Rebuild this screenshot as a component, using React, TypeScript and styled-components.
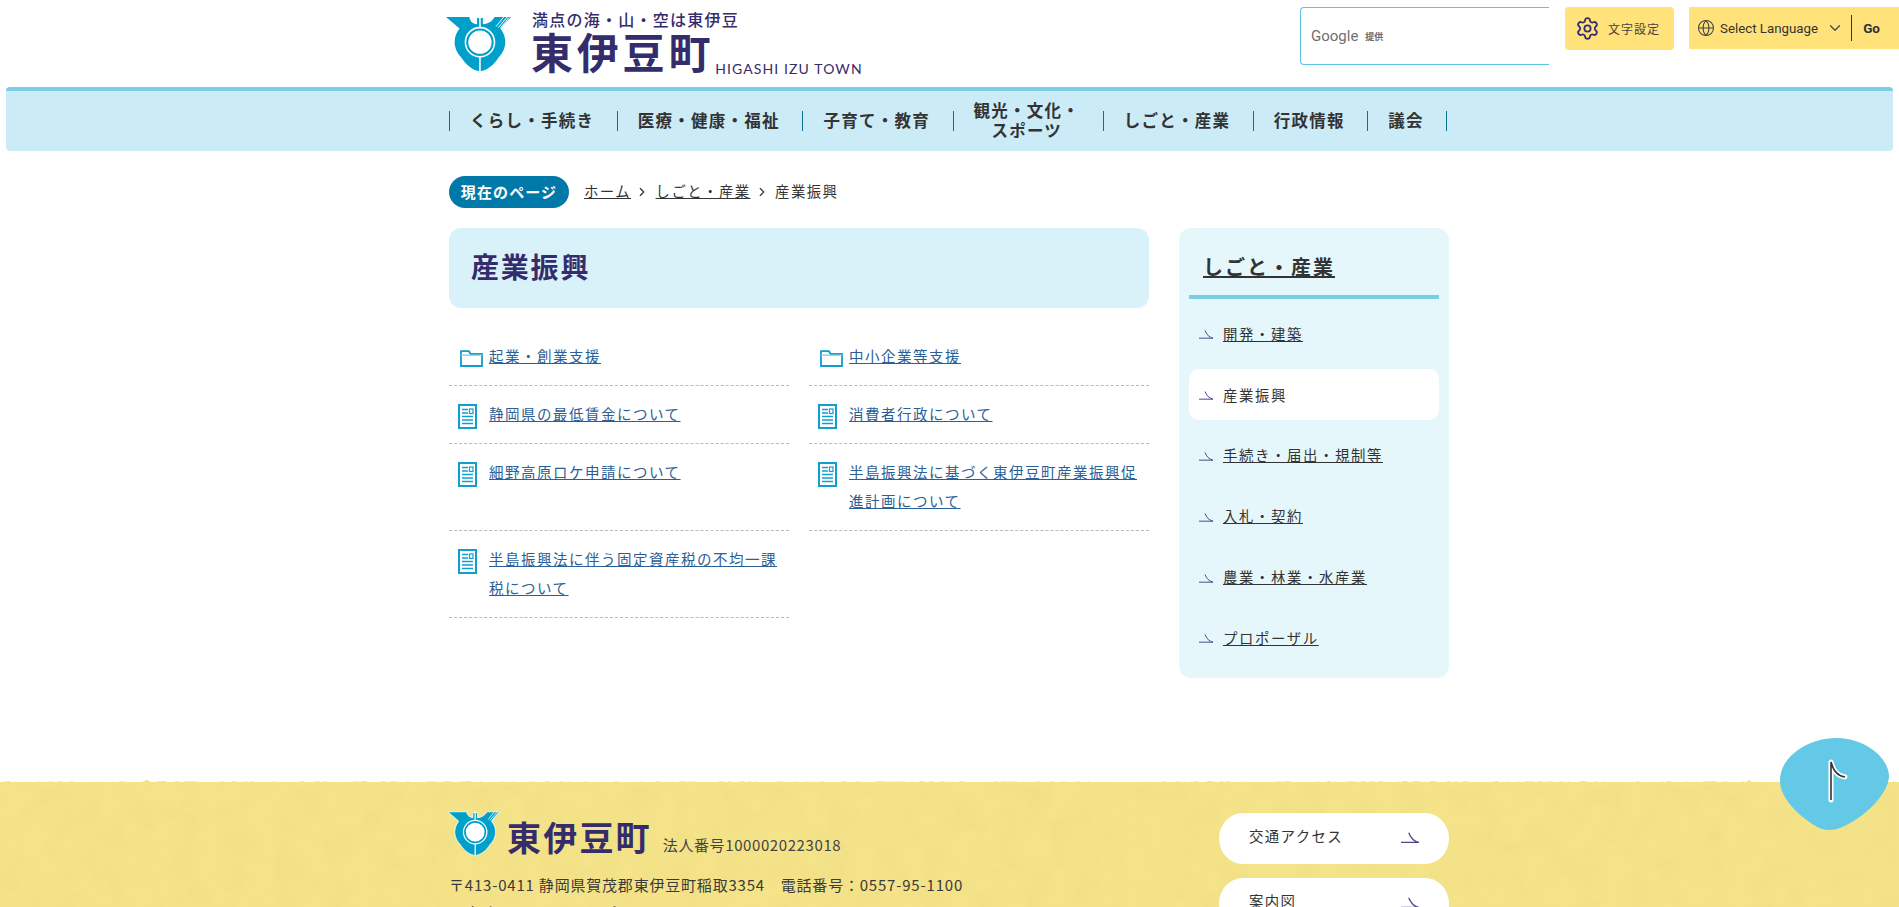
import { useMemo } from 'react'
import styled, { createGlobalStyle } from 'styled-components'
import { ChevronDown, ChevronRight, Globe, Settings } from 'lucide-react'

const GlobalStyle = createGlobalStyle`
  html, body {
    margin: 0;
    height: 907px;
    overflow: hidden;
    background: #fff;
  }
  body {
    font-family: "Noto Sans CJK JP", "Noto Sans", sans-serif;
    color: #333;
  }
  ul {
    margin: 0;
    padding: 0;
    list-style: none;
  }
  a {
    color: inherit;
  }
`

const Header = styled.header`
  display: flex;
  justify-content: space-between;
  align-items: flex-start;
  height: 87px;
  padding-left: 445px;
`

const LogoLink = styled.div`
  display: flex;
  gap: 20px;
  padding-top: 16px;
  height: 71px;
  box-sizing: border-box;
`

const LogoText = styled.div`
  display: flex;
  flex-direction: column;
  color: #352c6b;
  margin-top: -9px;
`

const Tagline = styled.div`
  font-size: 16px;
  font-weight: 500;
  letter-spacing: 1.25px;
  line-height: 20px;
  margin-top: 2px;
  white-space: nowrap;
`

const TownRow = styled.div`
  display: flex;
  align-items: flex-end;
  gap: 1px;
  margin: -2px 0 0 -1px;
`

const TownName = styled.div<{ $size: number; $spacing: number }>`
  font-size: ${({ $size }) => $size}px;
  letter-spacing: ${({ $spacing }) => $spacing}px;
  font-weight: 700;
  line-height: 1.15;
  color: #352c6b;
  white-space: nowrap;
`

const TownRoman = styled.div`
  font-family: "Lato", "Noto Sans", sans-serif;
  font-size: 14px;
  letter-spacing: 1.1px;
  line-height: 16px;
  margin-bottom: -2px;
  white-space: nowrap;
`

const Tools = styled.div`
  display: flex;
  align-items: flex-start;
  padding-top: 7px;
`

const SearchBox = styled.div`
  display: flex;
  align-items: center;
  gap: 7px;
  width: 249px;
  height: 58px;
  box-sizing: border-box;
  padding-left: 10px;
  border: 1px solid #5cc3e3;
  border-right: 0;
  border-radius: 4px 0 0 4px;
  margin-right: 16px;
`

const GoogleMark = styled.span`
  font-family: "Roboto", "Liberation Sans", sans-serif;
  font-size: 15px;
  color: #6f6f6f;
`

const Provided = styled.span`
  font-size: 9px;
  font-weight: 700;
  color: #666;
`

const SizeButton = styled.div`
  display: flex;
  align-items: center;
  gap: 8px;
  width: 109px;
  height: 43px;
  box-sizing: border-box;
  padding-left: 10px;
  margin-right: 15px;
  border-radius: 4px;
  background: #ffe27a;
  color: #352c6b;
`

const SizeLabel = styled.span`
  font-size: 12px;
  letter-spacing: 1px;
  color: #444;
`

const LanguageBar = styled.div`
  display: flex;
  align-items: center;
  width: 210px;
  height: 42px;
  box-sizing: border-box;
  padding-left: 8px;
  background: #ffe27a;
  color: #444;
`

const LanguageName = styled.span`
  font-family: "Roboto", "Liberation Sans", sans-serif;
  font-size: 13.3px;
  margin: 0 8px 0 5px;
  color: #333;
`

const GoLabel = styled.span`
  height: 26px;
  line-height: 26px;
  margin-left: 7px;
  padding-left: 11px;
  border-left: 1px solid #333;
  font-family: "Roboto", "Liberation Sans", sans-serif;
  font-size: 13.5px;
  font-weight: 700;
  color: #333;
`

const NavBar = styled.nav`
  margin: 0 6px;
  height: 64px;
  box-sizing: border-box;
  border-top: 4px solid #7ccde6;
  border-radius: 4px;
  background: #cbebf7;
`

const NavList = styled.ul`
  display: flex;
  align-items: center;
  width: 1000px;
  height: 60px;
  margin-left: 443px;
`

const NavItem = styled.li`
  flex: none;
  display: flex;
  align-items: center;
  justify-content: center;
  height: 20px;
  padding: 0 22.6px 0 20px;
  border-left: 1px solid #0e6f8f;
  font-size: 16.5px;
  font-weight: 700;
  letter-spacing: 1.25px;
  line-height: 20px;
  text-align: center;
  color: #333;
  white-space: pre-line;
  &:last-child {
    border-right: 1px solid #0e6f8f;
  }
`

const NavLabel = styled.span`
  margin-top: -2px;
`

const Main = styled.main`
  width: 1000px;
  margin: 25px 0 0 449px;
`

const Breadcrumb = styled.div`
  display: flex;
  align-items: center;
  height: 32px;
  font-size: 14.4px;
  letter-spacing: 1.44px;
`

const CrumbText = styled.a`
  margin-top: -4px;
`

const CurrentPill = styled.div`
  display: flex;
  align-items: center;
  justify-content: center;
  width: 120px;
  height: 32px;
  box-sizing: border-box;
  padding-bottom: 2px;
  margin-right: 15px;
  border-radius: 16px;
  background: #0079a8;
  color: #fff;
  font-weight: 700;
  font-size: 15px;
  letter-spacing: 1.1px;
`

const CrumbSep = styled.span`
  display: flex;
  margin: 0 6.5px 0 4px;
  color: #333;
`

const Columns = styled.div`
  display: flex;
  justify-content: space-between;
  align-items: flex-start;
  margin-top: 20px;
`

const Content = styled.div`
  width: 700px;
`

const TitlePanel = styled.h1`
  margin: 0 0 20px;
  height: 80px;
  box-sizing: border-box;
  padding-left: 22px;
  border-radius: 12px;
  background: #d9f2fa;
  color: #352c6b;
  font-size: 28px;
  letter-spacing: 1.8px;
  font-weight: 700;
  line-height: 76px;
`

const LinkGrid = styled.ul`
  display: grid;
  grid-template-columns: 340px 340px;
  column-gap: 20px;
`

const LinkRow = styled.li`
  display: flex;
  align-items: flex-start;
  padding: 13px 0 15px 9px;
  border-bottom: 1px dashed #bbb;
  font-size: 14.5px;
  letter-spacing: 1.5px;
  line-height: 29px;
  color: #2a6096;
`

const IconCell = styled.span`
  flex: none;
  width: 31px;
  height: 29px;
  padding-top: 5px;
  box-sizing: border-box;
`

const Side = styled.aside`
  width: 270px;
  box-sizing: border-box;
  padding: 0 10px 15px;
  border-radius: 12px;
  background: #e6f7fb;
`

const SideTitle = styled.div`
  height: 67px;
  box-sizing: border-box;
  padding: 25px 0 0 14px;
  font-size: 20px;
  font-weight: 700;
  letter-spacing: 2px;
  line-height: 28px;
  color: #333;
  a {
    text-decoration-thickness: 2px;
  }
`

const SideRule = styled.div`
  height: 4px;
  background: #7ccde6;
`

const SideList = styled.ul`
  display: flex;
  flex-direction: column;
  gap: 10px;
  padding-top: 9px;
`

const SideItem = styled.li<{ $current?: boolean }>`
  display: flex;
  align-items: center;
  gap: 10px;
  height: 50.8px;
  padding-left: 10px;
  border-radius: 10px;
  background: ${({ $current }) => ($current ? '#fff' : 'transparent')};
  font-size: 14.4px;
  letter-spacing: 1.6px;
  color: #333;
`

const Footer = styled.footer`
  position: relative;
  margin-top: 104px;
  height: 400px;
  background: #f4e389;
`

const FooterTexture = styled.svg`
  position: absolute;
  inset: 0;
  width: 100%;
  height: 100%;
`

const FooterEdge = styled.svg`
  position: absolute;
  left: 0;
  top: -5px;
`

const FooterInner = styled.div`
  position: relative;
  display: flex;
  justify-content: space-between;
  width: 1000px;
  margin-left: 449px;
  padding-top: 31px;
`

const FooterLogoRow = styled.div`
  display: flex;
  align-items: flex-end;
  height: 44px;
  margin-left: -2px;
`

const FooterTown = styled(TownName)`
  margin: 0 0 1px 6px;
`

const CorporateNo = styled.span`
  margin: 0 0 1px 11px;
  font-size: 15px;
  letter-spacing: 0.6px;
  line-height: 22px;
  color: #444;
`

const Address = styled.p`
  margin: 14px 0 0;
  font-size: 15px;
  letter-spacing: 0.8px;
  line-height: 28px;
  white-space: pre-line;
  color: #3a3a3a;
`

const FooterLinks = styled.div`
  display: flex;
  flex-direction: column;
  gap: 14px;
  width: 230px;
`

const FooterLink = styled.div`
  display: flex;
  align-items: center;
  justify-content: space-between;
  height: 51px;
  box-sizing: border-box;
  padding: 0 30px 5px;
  border-radius: 26px / 28px;
  background: #fff;
  font-size: 14.4px;
  letter-spacing: 1.4px;
`

const BackToTop = styled.svg`
  position: fixed;
  left: 1780px;
  top: 738px;
`

const navItems = ['くらし・手続き', '医療・健康・福祉', '子育て・教育', '観光・文化・\nスポーツ', 'しごと・産業', '行政情報', '議会']

const links = [
  { text: '起業・創業支援', folder: true },
  { text: '中小企業等支援', folder: true },
  { text: '静岡県の最低賃金について' },
  { text: '消費者行政について' },
  { text: '細野高原ロケ申請について' },
  { text: '半島振興法に基づく東伊豆町産業振興促進計画について' },
  { text: '半島振興法に伴う固定資産税の不均一課税について' },
]

const sideItems = ['開発・建築', '産業振興', '手続き・届出・規制等', '入札・契約', '農業・林業・水産業', 'プロポーザル']

const Emblem = ({ width, outline }: { width: number; outline?: boolean }) => (
  <svg width={width} height={width * 0.84} viewBox="5 15 69 58" style={{ flex: 'none', overflow: 'visible' }}>
    <path
      d="M6 16H30C31 20 33 23 38 23.5V17H44V23.5C50 23 54 20 56 16H73L62 28C70 38 68 50 60 58C55 66 48 71 41 72C34 71 27 66 22 58C14 50 12 38 20 28Z"
      fill="#00a0cb"
      stroke={outline ? '#fff' : 'none'}
      strokeWidth={outline ? 1 : 0}
    />
    <path d="M41 16V27M41 54V73" stroke="#fff" strokeWidth="1.6" />
    <path d="M60 27L69 16M62.5 27L71 16.5M57.5 26L65.5 16" stroke="#fff" strokeWidth="1" />
    <circle cx="41" cy="42" r="15" fill="#00a0cb" stroke="#fff" strokeWidth="1.6" />
    <circle cx="41" cy="42" r="12" fill="#fff" />
  </svg>
)

const FolderIcon = () => (
  <svg width="23" height="17" viewBox="0 0 23 17" style={{ marginTop: -4, marginLeft: 2 }}>
    <path d="M1 16V1.2H9L10.5 4H22V16Z" fill="#fff" stroke="#0f9dce" strokeWidth="1.8" />
    <path d="M1 5.2H22" stroke="#8fd3ea" strokeWidth="1.5" />
  </svg>
)

const DocIcon = () => (
  <svg width="19" height="25" viewBox="0 0 19 25">
    <rect x="1" y="1" width="17" height="23" fill="#fff" stroke="#119fcf" strokeWidth="2" />
    <path d="M4 5.5H10M4 9H10M4 12.5H15M4 16H15M4 19.5H15" stroke="#119fcf" strokeWidth="1.3" />
    <rect x="11.5" y="5" width="3.5" height="4.5" fill="none" stroke="#119fcf" strokeWidth="1.2" />
  </svg>
)

const HalfArrow = ({ width = 14 }: { width?: number }) => (
  <svg width={width} height={width * 0.64} viewBox="0 0 14 9" style={{ flex: 'none', marginTop: 3 }}>
    <path d="M0 8.2H14C10 7.4 7.6 4.4 6 .5" fill="none" stroke="#4f4788" strokeWidth="1" />
  </svg>
)

const useEdgePath = () =>
  useMemo(() => {
    let seed = 17
    const next = () => {
      seed = (seed * 1103515245 + 12345) & 0x7fffffff
      return seed / 0x7fffffff
    }
    let d = 'M0 8'
    for (let x = 0; x <= 1899; x += 3) {
      const y = x === 1749 || x === 147 ? 2.5 : 4 + next() * 2
      d += `L${x} ${y.toFixed(1)}`
    }
    return `${d}L1899 8Z`
  }, [])

const App = () => {
  const edgePath = useEdgePath()

  return (
    <>
      <GlobalStyle />
      <Header>
        <LogoLink>
          <Emblem width={67} />
          <LogoText>
            <Tagline>満点の海・山・空は東伊豆</Tagline>
            <TownRow>
              <TownName $size={42} $spacing={3.8}>東伊豆町</TownName>
              <TownRoman>HIGASHI IZU TOWN</TownRoman>
            </TownRow>
          </LogoText>
        </LogoLink>
        <Tools>
          <SearchBox>
            <GoogleMark>Google</GoogleMark>
            <Provided>提供</Provided>
          </SearchBox>
          <SizeButton>
            <Settings size={25} strokeWidth={1.7} />
            <SizeLabel>文字設定</SizeLabel>
          </SizeButton>
          <LanguageBar>
            <Globe size={18} strokeWidth={1.4} />
            <LanguageName>Select Language</LanguageName>
            <ChevronDown size={18} strokeWidth={1.6} />
            <GoLabel>Go</GoLabel>
          </LanguageBar>
        </Tools>
      </Header>

      <NavBar>
        <NavList>
          {navItems.map((item) => (
            <NavItem key={item}><NavLabel>{item}</NavLabel></NavItem>
          ))}
        </NavList>
      </NavBar>

      <Main>
        <Breadcrumb>
          <CurrentPill>現在のページ</CurrentPill>
          <CrumbText href="#home">ホーム</CrumbText>
          <CrumbSep><ChevronRight size={14} strokeWidth={2} /></CrumbSep>
          <CrumbText href="#work">しごと・産業</CrumbText>
          <CrumbSep><ChevronRight size={14} strokeWidth={2} /></CrumbSep>
          <CrumbText as="span">産業振興</CrumbText>
        </Breadcrumb>

        <Columns>
          <Content>
            <TitlePanel>産業振興</TitlePanel>
            <LinkGrid>
              {links.map((link) => (
                <LinkRow key={link.text}>
                  <IconCell>{link.folder ? <FolderIcon /> : <DocIcon />}</IconCell>
                  <a href="#page">{link.text}</a>
                </LinkRow>
              ))}
            </LinkGrid>
          </Content>

          <Side>
            <SideTitle><a href="#work">しごと・産業</a></SideTitle>
            <SideRule />
            <SideList>
              {sideItems.map((item) => (
                <SideItem key={item} $current={item === '産業振興'}>
                  <HalfArrow />
                  {item === '産業振興' ? <span>{item}</span> : <a href="#side">{item}</a>}
                </SideItem>
              ))}
            </SideList>
          </Side>
        </Columns>
      </Main>

      <Footer>
        <FooterTexture>
          <filter id="paper" colorInterpolationFilters="sRGB">
            <feTurbulence type="fractalNoise" baseFrequency="0.04" numOctaves="4" seed="4" />
            <feColorMatrix values="0 0 0 0 0.93  0 0 0 0 0.86  0 0 0 0 0.5  0 0 0 0.9 -0.32" />
          </filter>
          <rect width="100%" height="100%" filter="url(#paper)" />
        </FooterTexture>
        <FooterEdge width="1899" height="8" viewBox="0 0 1899 8">
          <path d={edgePath} fill="#f4e389" />
        </FooterEdge>
        <FooterInner>
          <div>
            <FooterLogoRow>
              <Emblem width={54} outline />
              <FooterTown $size={34} $spacing={2.2}>東伊豆町</FooterTown>
              <CorporateNo>法人番号1000020223018</CorporateNo>
            </FooterLogoRow>
            <Address>{'〒413-0411 静岡県賀茂郡東伊豆町稲取3354　電話番号：0557-95-1100\n開庁時間　月曜日から金曜日 8:30から17:15'}</Address>
          </div>
          <FooterLinks>
            <FooterLink>交通アクセス<HalfArrow width={18} /></FooterLink>
            <FooterLink>案内図<HalfArrow width={18} /></FooterLink>
          </FooterLinks>
        </FooterInner>
      </Footer>

      <BackToTop width="109" height="93" viewBox="0 0 109 93">
        <path d="M57 0C85 0 109 20 109 38C109 55 85 80 60 90C52 93 42 93 34 87C15 75 0 58 0 43C0 18 28 0 57 0Z" fill="#64c9e6" />
        <path d="M51 62V24C53 32 58 38 65 39" fill="none" stroke="#fff" strokeWidth="5" strokeLinecap="round" strokeLinejoin="round" />
        <path d="M51 62V24C53 32 58 38 65 39" fill="none" stroke="#333" strokeWidth="1.6" />
      </BackToTop>
    </>
  )
}

export default App
